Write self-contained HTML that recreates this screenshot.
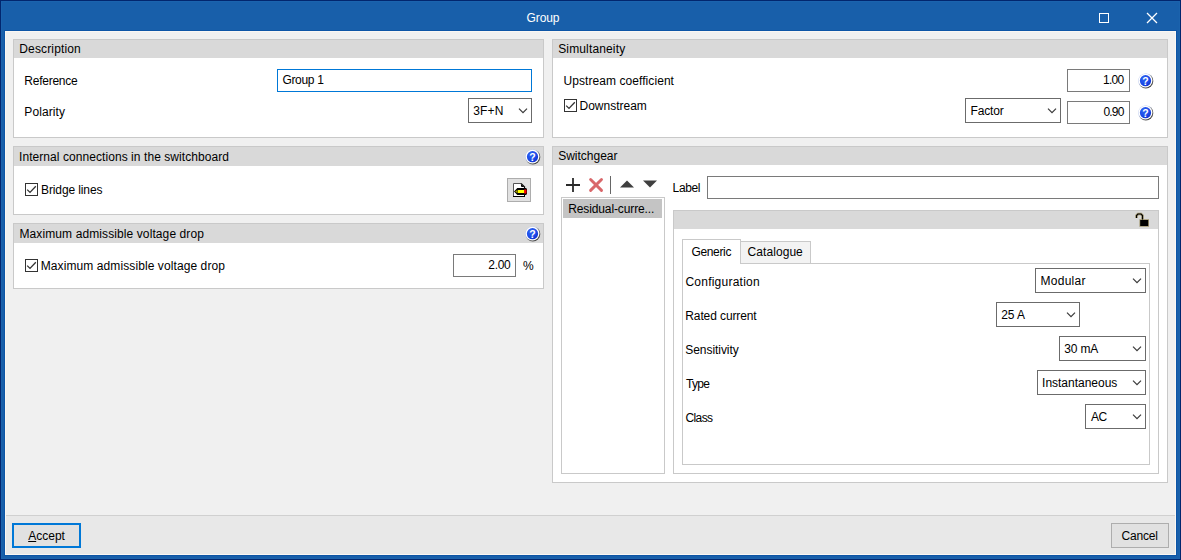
<!DOCTYPE html>
<html lang="en"><head><meta charset="utf-8"><title>Group</title>
<style>
html,body{margin:0;padding:0}
body{width:1181px;height:560px;overflow:hidden;position:relative;background:#02266e;font:12px 'Liberation Sans',sans-serif;color:#000}
div,span{box-sizing:border-box}
.a{position:absolute}
.t{position:absolute;white-space:nowrap;line-height:14px;height:14px;color:#000}
.w{color:#fff}
.pn{position:absolute;background:#fff;border:1px solid #c9c9c9}
.hd{position:absolute;left:0;top:0;right:0;height:18px;background:#d9d9d9}
.in{position:absolute;background:#fff;border:1px solid #7a7a7a}
.cb{position:absolute;background:#fff;border:1px solid #6b6b6b}
.ck{position:absolute;width:13px;height:13px;background:#fff;border:1px solid #333}
.bt{position:absolute;background:#e1e1e1;border:1px solid #adadad}
svg{position:absolute;overflow:visible}
</style></head><body>

<div class="a" style="left:1px;top:1px;width:1179px;height:558px;background:#1b63ad"></div>
<div class="a" style="left:2px;top:2px;width:1177px;height:556px;background:#185faa"></div>
<div class="a" style="left:4px;top:30px;width:1173px;height:526px;background:#0d55a6"></div>
<div class="a" style="left:5px;top:31px;width:1171px;height:524px;background:#f0f0f0"></div>
<div class="a" style="left:5px;top:515px;width:1171px;height:1px;background:#d0d0d0"></div>
<div class="a" style="left:5px;top:516px;width:1171px;height:39px;background:#e8e8e8"></div>
<div class="a" style="left:5px;top:31px;width:1171px;height:524px;border:1px solid #faf7f3"></div>
<div class="a" style="left:1099px;top:13px;width:10px;height:10px;border:1px solid #fff"></div>
<svg style="left:1146px;top:12px" width="12" height="12" viewBox="0 0 12 12"><path d="M1 1 L11 11 M11 1 L1 11" stroke="#fff" stroke-width="1.3" fill="none"/></svg>
<div class="pn" style="left:13px;top:39px;width:531px;height:99px"><div class="hd" style="height:18px"></div></div>
<div class="pn" style="left:13px;top:146px;width:531px;height:69px"><div class="hd" style="height:19px"></div></div>
<div class="pn" style="left:13px;top:223px;width:531px;height:66px"><div class="hd" style="height:19px"></div></div>
<div class="pn" style="left:552px;top:39px;width:616px;height:99px"><div class="hd" style="height:18px"></div></div>
<div class="pn" style="left:552px;top:146px;width:616px;height:337px"><div class="hd" style="height:18px"></div></div>
<div class="a" style="left:561px;top:197px;width:104px;height:277px;background:#fff;border:1px solid #c9c9c9"></div>
<div class="a" style="left:563px;top:199px;width:99px;height:19px;background:#c4c4c4"></div>
<div class="pn" style="left:673px;top:210px;width:486px;height:264px"><div class="hd"></div></div>
<svg style="left:1135px;top:212px" width="16" height="16" viewBox="0 0 16 16"><path d="M1.5 6 V3.5 L3 2 H6 L7.5 3.5 V7.5" fill="none" stroke="#a39872" stroke-width="2.6"/><rect x="4.4" y="7.2" width="9.6" height="7.6" fill="#a39872"/><path d="M1.5 6 V3.5 L3 2 H6 L7.5 3.5 V7.5" fill="none" stroke="#000" stroke-width="1.1"/><rect x="5.2" y="8" width="8" height="6" fill="#000"/></svg>
<div class="a" style="left:682px;top:263px;width:468px;height:202px;background:#fff;border:1px solid #c9c9c9"></div>
<div class="a" style="left:740px;top:241px;width:71px;height:23px;background:#f3f3f3;border:1px solid #c9c9c9"></div>
<div class="a" style="left:682px;top:239px;width:59px;height:25px;background:#fff;border:1px solid #c9c9c9;border-bottom:none"></div>
<div class="in" style="left:277px;top:69px;width:255px;height:23px;border-color:#0078d7"></div>
<div class="cb" style="left:468px;top:98px;width:64px;height:25px"></div>
<svg style="left:518px;top:108px" width="10" height="7" viewBox="0 0 10 7"><path d="M1 0.7 L5 4.7 L9 0.7" stroke="#3a3a3a" stroke-width="1.2" fill="none"/></svg>
<div class="cb" style="left:965px;top:98px;width:96px;height:25px"></div>
<svg style="left:1047px;top:108px" width="10" height="7" viewBox="0 0 10 7"><path d="M1 0.7 L5 4.7 L9 0.7" stroke="#3a3a3a" stroke-width="1.2" fill="none"/></svg>
<div class="cb" style="left:1035px;top:268px;width:111px;height:25px"></div>
<svg style="left:1132px;top:278px" width="10" height="7" viewBox="0 0 10 7"><path d="M1 0.7 L5 4.7 L9 0.7" stroke="#3a3a3a" stroke-width="1.2" fill="none"/></svg>
<div class="cb" style="left:996px;top:302px;width:84px;height:25px"></div>
<svg style="left:1066px;top:312px" width="10" height="7" viewBox="0 0 10 7"><path d="M1 0.7 L5 4.7 L9 0.7" stroke="#3a3a3a" stroke-width="1.2" fill="none"/></svg>
<div class="cb" style="left:1059px;top:336px;width:87px;height:25px"></div>
<svg style="left:1132px;top:346px" width="10" height="7" viewBox="0 0 10 7"><path d="M1 0.7 L5 4.7 L9 0.7" stroke="#3a3a3a" stroke-width="1.2" fill="none"/></svg>
<div class="cb" style="left:1037px;top:370px;width:109px;height:25px"></div>
<svg style="left:1132px;top:380px" width="10" height="7" viewBox="0 0 10 7"><path d="M1 0.7 L5 4.7 L9 0.7" stroke="#3a3a3a" stroke-width="1.2" fill="none"/></svg>
<div class="cb" style="left:1085px;top:404px;width:61px;height:25px"></div>
<svg style="left:1132px;top:414px" width="10" height="7" viewBox="0 0 10 7"><path d="M1 0.7 L5 4.7 L9 0.7" stroke="#3a3a3a" stroke-width="1.2" fill="none"/></svg>
<div class="in" style="left:453px;top:254px;width:63px;height:23px"></div>
<div class="in" style="left:1067px;top:69px;width:63px;height:23px"></div>
<div class="in" style="left:1067px;top:101px;width:63px;height:23px"></div>
<div class="in" style="left:707px;top:176px;width:452px;height:23px"></div>
<div class="ck" style="left:25px;top:183px"></div>
<svg style="left:25px;top:183px" width="13" height="13" viewBox="0 0 13 13"><path d="M2.2 6.6 L5.0 9.4 L10.8 3.3" stroke="#333" stroke-width="1.3" fill="none"/></svg>
<div class="ck" style="left:25px;top:259px"></div>
<svg style="left:25px;top:259px" width="13" height="13" viewBox="0 0 13 13"><path d="M2.2 6.6 L5.0 9.4 L10.8 3.3" stroke="#333" stroke-width="1.3" fill="none"/></svg>
<div class="ck" style="left:564px;top:99px"></div>
<svg style="left:564px;top:99px" width="13" height="13" viewBox="0 0 13 13"><path d="M2.2 6.6 L5.0 9.4 L10.8 3.3" stroke="#333" stroke-width="1.3" fill="none"/></svg>
<svg style="left:525px;top:149px" width="16" height="16" viewBox="0 0 16 16"><defs><radialGradient id="hg1" cx="0.35" cy="0.3" r="0.85"><stop offset="0" stop-color="#2e63f2"/><stop offset="0.6" stop-color="#1a49e6"/><stop offset="1" stop-color="#0a28c4"/></radialGradient><linearGradient id="hs1" x1="0" y1="0" x2="1" y2="1"><stop offset="0.35" stop-color="#b4c4ec"/><stop offset="0.6" stop-color="#6a6a6a"/><stop offset="1" stop-color="#2a2a2a"/></linearGradient></defs><circle cx="7.8" cy="7.9" r="7.5" fill="url(#hs1)"/><circle cx="7.5" cy="7.6" r="6.9" fill="#fff"/><circle cx="7.5" cy="7.7" r="5.6" fill="url(#hg1)"/><text x="7.5" y="11.9" text-anchor="middle" font-family="Liberation Sans, sans-serif" font-weight="bold" font-size="10.5" fill="#fff">?</text></svg>
<svg style="left:525px;top:226px" width="16" height="16" viewBox="0 0 16 16"><defs><radialGradient id="hg2" cx="0.35" cy="0.3" r="0.85"><stop offset="0" stop-color="#2e63f2"/><stop offset="0.6" stop-color="#1a49e6"/><stop offset="1" stop-color="#0a28c4"/></radialGradient><linearGradient id="hs2" x1="0" y1="0" x2="1" y2="1"><stop offset="0.35" stop-color="#b4c4ec"/><stop offset="0.6" stop-color="#6a6a6a"/><stop offset="1" stop-color="#2a2a2a"/></linearGradient></defs><circle cx="7.8" cy="7.9" r="7.5" fill="url(#hs2)"/><circle cx="7.5" cy="7.6" r="6.9" fill="#fff"/><circle cx="7.5" cy="7.7" r="5.6" fill="url(#hg2)"/><text x="7.5" y="11.9" text-anchor="middle" font-family="Liberation Sans, sans-serif" font-weight="bold" font-size="10.5" fill="#fff">?</text></svg>
<svg style="left:1138px;top:73px" width="16" height="16" viewBox="0 0 16 16"><defs><radialGradient id="hg3" cx="0.35" cy="0.3" r="0.85"><stop offset="0" stop-color="#2e63f2"/><stop offset="0.6" stop-color="#1a49e6"/><stop offset="1" stop-color="#0a28c4"/></radialGradient><linearGradient id="hs3" x1="0" y1="0" x2="1" y2="1"><stop offset="0.35" stop-color="#b4c4ec"/><stop offset="0.6" stop-color="#6a6a6a"/><stop offset="1" stop-color="#2a2a2a"/></linearGradient></defs><circle cx="7.8" cy="7.9" r="7.5" fill="url(#hs3)"/><circle cx="7.5" cy="7.6" r="6.9" fill="#fff"/><circle cx="7.5" cy="7.7" r="5.6" fill="url(#hg3)"/><text x="7.5" y="11.9" text-anchor="middle" font-family="Liberation Sans, sans-serif" font-weight="bold" font-size="10.5" fill="#fff">?</text></svg>
<svg style="left:1138px;top:105px" width="16" height="16" viewBox="0 0 16 16"><defs><radialGradient id="hg4" cx="0.35" cy="0.3" r="0.85"><stop offset="0" stop-color="#2e63f2"/><stop offset="0.6" stop-color="#1a49e6"/><stop offset="1" stop-color="#0a28c4"/></radialGradient><linearGradient id="hs4" x1="0" y1="0" x2="1" y2="1"><stop offset="0.35" stop-color="#b4c4ec"/><stop offset="0.6" stop-color="#6a6a6a"/><stop offset="1" stop-color="#2a2a2a"/></linearGradient></defs><circle cx="7.8" cy="7.9" r="7.5" fill="url(#hs4)"/><circle cx="7.5" cy="7.6" r="6.9" fill="#fff"/><circle cx="7.5" cy="7.7" r="5.6" fill="url(#hg4)"/><text x="7.5" y="11.9" text-anchor="middle" font-family="Liberation Sans, sans-serif" font-weight="bold" font-size="10.5" fill="#fff">?</text></svg>
<div class="bt" style="left:507px;top:178px;width:24px;height:24px"></div>
<svg style="left:507px;top:178px" width="24" height="24" viewBox="0 0 24 24"><path d="M6.5 5.5 H14.5 L17.5 8.5 V18.5 H6.5 Z" fill="#fff" stroke="none"/><path d="M6.5 18 V5.5 H14" fill="none" stroke="#555" stroke-width="1"/><path d="M6 18.5 H18 M17.5 17 V19 M17.5 9 V11" fill="none" stroke="#000" stroke-width="1"/><path d="M14 5.5 L18 9.5" fill="none" stroke="#000" stroke-width="1.3"/><path d="M14.5 7 V8.5 H16.5" fill="none" stroke="#000" stroke-width="1"/><path d="M7 13.5 L10.3 10 H19 L20 11 V16 L19 17 H10.3 Z" fill="#000"/><rect x="11" y="12" width="6.5" height="3" fill="#ffff00"/><rect x="17.2" y="11.5" width="2.3" height="4" fill="#ff0000"/><path d="M8 13.5 L10.6 11.7 V15.3 Z" fill="#a8a000"/></svg>
<svg style="left:566px;top:178px" width="14" height="14" viewBox="0 0 14 14"><path d="M7 0 V14 M0 7 H14" stroke="#2a2a2a" stroke-width="1.8" fill="none"/></svg>
<svg style="left:589px;top:178px" width="14" height="14" viewBox="0 0 14 14"><path d="M1.6 1.5 L12.5 12.4 M12.5 1.5 L1.6 12.4" stroke="#d9676a" stroke-width="2.9" stroke-linecap="round" fill="none"/></svg>
<div class="a" style="left:610px;top:176px;width:1px;height:18px;background:#666"></div>
<svg style="left:620px;top:180px" width="14" height="8" viewBox="0 0 14 8"><path d="M0 7.5 L7 0.5 L14 7.5 Z" fill="#3f3f3f"/></svg>
<svg style="left:643px;top:180px" width="14" height="8" viewBox="0 0 14 8"><path d="M0 0.5 L7 7.5 L14 0.5 Z" fill="#3f3f3f"/></svg>
<div class="bt" style="left:12px;top:523px;width:69px;height:25px;border:2px solid #0078d7"></div>
<div class="bt" style="left:1111px;top:523px;width:58px;height:25px"></div>
<div class="t w" style="left:526.60px;top:11px;letter-spacing:-0.100px">Group</div>
<div class="t " style="left:19.30px;top:42px;letter-spacing:0.140px">Description</div>
<div class="t " style="left:24.30px;top:74px;letter-spacing:-0.250px">Reference</div>
<div class="t " style="left:24.30px;top:105px;letter-spacing:0.100px">Polarity</div>
<div class="t " style="left:282.40px;top:73px;letter-spacing:-0.300px">Group 1</div>
<div class="t " style="left:473.20px;top:104px;letter-spacing:0.167px">3F+N</div>
<div class="t " style="left:19.00px;top:150px;letter-spacing:0.066px">Internal connections in the switchboard</div>
<div class="t " style="left:41.00px;top:183px;letter-spacing:-0.109px">Bridge lines</div>
<div class="t " style="left:19.50px;top:227px;letter-spacing:0.100px">Maximum admissible voltage drop</div>
<div class="t " style="left:40.75px;top:259px;letter-spacing:0.092px">Maximum admissible voltage drop</div>
<div class="t " style="left:488.30px;top:258px;letter-spacing:-0.333px">2.00</div>
<div class="t " style="left:522.90px;top:259px">%</div>
<div class="t " style="left:558.20px;top:42px;letter-spacing:0.145px">Simultaneity</div>
<div class="t " style="left:563.50px;top:74px;letter-spacing:0.068px">Upstream coefficient</div>
<div class="t " style="left:579.50px;top:99px">Downstream</div>
<div class="t " style="left:1102.90px;top:73px;letter-spacing:-0.667px">1.00</div>
<div class="t " style="left:1103.40px;top:105px;letter-spacing:-0.800px">0.90</div>
<div class="t " style="left:970.50px;top:104px;letter-spacing:-0.160px">Factor</div>
<div class="t " style="left:558.20px;top:149px;letter-spacing:-0.011px">Switchgear</div>
<div class="t " style="left:672.60px;top:181px;letter-spacing:-0.375px">Label</div>
<div class="t " style="left:568.25px;top:202px;letter-spacing:-0.122px">Residual-curre...</div>
<div class="t " style="left:691.40px;top:245px;letter-spacing:-0.333px">Generic</div>
<div class="t " style="left:747.60px;top:245px;letter-spacing:0.062px">Catalogue</div>
<div class="t " style="left:685.40px;top:275px;letter-spacing:0.242px">Configuration</div>
<div class="t " style="left:685.25px;top:309px;letter-spacing:-0.104px">Rated current</div>
<div class="t " style="left:685.25px;top:343px;letter-spacing:-0.050px">Sensitivity</div>
<div class="t " style="left:686.00px;top:377px;letter-spacing:-0.667px">Type</div>
<div class="t " style="left:685.50px;top:411px;letter-spacing:-0.625px">Class</div>
<div class="t " style="left:1040.50px;top:274px;letter-spacing:0.267px">Modular</div>
<div class="t " style="left:1001.20px;top:308px;letter-spacing:-0.067px">25 A</div>
<div class="t " style="left:1064.20px;top:342px;letter-spacing:-0.125px">30 mA</div>
<div class="t " style="left:1042.10px;top:376px;letter-spacing:-0.017px">Instantaneous</div>
<div class="t " style="left:1091.00px;top:410px;letter-spacing:-0.400px">AC</div>
<div class="t " style="left:1121.40px;top:529px;letter-spacing:-0.160px">Cancel</div>
<div class="t" style="left:28.2px;top:529px"><span style="text-decoration:underline">A</span>ccept</div>
</body></html>
